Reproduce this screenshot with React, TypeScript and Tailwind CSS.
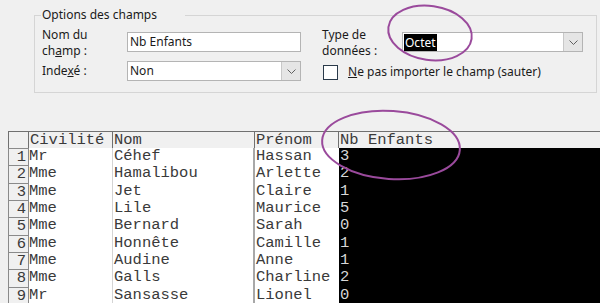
import React from "react";

const rows = [
  ["Mr", "Céhef", "Hassan", "3"],
  ["Mme", "Hamalibou", "Arlette", "2"],
  ["Mme", "Jet", "Claire", "1"],
  ["Mme", "Lile", "Maurice", "5"],
  ["Mme", "Bernard", "Sarah", "0"],
  ["Mme", "Honnête", "Camille", "1"],
  ["Mme", "Audine", "Anne", "1"],
  ["Mme", "Galls", "Charline", "2"],
  ["Mr", "Sansasse", "Lionel", "0"],
];

// row heights alternate so the 9 rows land on the same pixels as the reference
const heights = ["h-[17px]", "h-[18px]", "h-[17px]", "h-[17px]", "h-[18px]", "h-[17px]", "h-[17px]", "h-[18px]", "h-[17px]"];

function Chevron() {
  return (
    <svg width="9" height="5" viewBox="0 0 9 5" fill="none">
      <path d="M0.5 0.5 L4.5 4.5 L8.5 0.5" stroke="#606060" strokeWidth="1" />
    </svg>
  );
}

function Combo({ width, children }: { width: string; children: React.ReactNode }) {
  return (
    <div className={`flex h-[20px] ${width} border border-[#b4b4b4] bg-white`}>
      <div className="flex flex-1 items-center pl-[1px]">{children}</div>
      <div className="flex w-[19px] items-center justify-center border-l border-[#c8c8c8] bg-[#e5e5e5]">
        <Chevron />
      </div>
    </div>
  );
}

export default function App() {
  return (
    <div
      className="relative h-[303px] w-[600px] overflow-hidden bg-[#f0f0f0] text-[#1a1a1a]"
      style={{ fontFamily: '"Noto Sans", "Open Sans", sans-serif' }}
    >
      {/* Options des champs */}
      <fieldset className="ml-[34px] mt-[7px] w-[563px] border border-[#d5d5d5] pb-[11px]">
        <legend className="ml-[6px] pr-[28px] pl-[1px] text-[12px] leading-[16px]">Options des champs</legend>
        <div className="mt-[4px] flex pl-[7px] text-[12px] leading-[16px]">
          <div className="w-[259px]">
            <div className="flex">
              <div className="w-[85px]">
                Nom du
                <br />
                ch<span className="underline">a</span>mp :
              </div>
              <div className="mt-[5px] flex h-[20px] w-[174px] items-center border border-[#b4b4b4] bg-white pl-[2px]">
                Nb Enfants
              </div>
            </div>
            <div className="mt-[2px] flex items-center">
              <div className="w-[85px]">
                Inde<span className="underline">x</span>é :
              </div>
              <Combo width="w-[174px]">
                <span className="pl-[1px]">Non</span>
              </Combo>
            </div>
          </div>
          <div className="ml-[21px]">
            <div className="flex">
              <div className="w-[80px]">
                Type de
                <br />
                données :
              </div>
              <div className="mt-[5px]">
                <Combo width="w-[181px]">
                  <span className="bg-black px-[1px] leading-[17px] text-white">Octet</span>
                </Combo>
              </div>
            </div>
            <div className="mt-[5px] flex items-center">
              <div className="ml-[1px] h-[15px] w-[15px] border border-[#2a3a4a] bg-white" />
              <div className="ml-[10px]">
                <span className="underline">N</span>e pas importer le champ (sauter)
              </div>
            </div>
          </div>
        </div>
      </fieldset>

      {/* Data preview grid */}
      <div
        className="ml-[8px] mt-[38px] grid grid-cols-[21px_84px_142px_84px_1fr] text-[15.5px] leading-[17px] text-[#3a3a3a]"
        style={{ fontFamily: '"Liberation Mono", "Courier New", monospace' }}
      >
        <div className="h-[17px] border-l border-t border-r border-[#707070] bg-[#f0f0f0]" />
        <div className="h-[17px] border-t border-r border-[#707070] bg-[#f0f0f0] pl-[1px]">Civilité</div>
        <div className="h-[17px] border-t border-r border-[#707070] bg-[#f0f0f0] pl-[1px]">Nom</div>
        <div className="h-[17px] border-t border-r border-[#707070] bg-[#f0f0f0] pl-[1px]">Prénom</div>
        <div className="h-[17px] border-t border-[#707070] bg-[#f0f0f0] pl-[1px]">Nb Enfants</div>
        {rows.map((r, i) => (
          <React.Fragment key={i}>
            <div className={`${heights[i]} border-l border-t border-r border-[#8a8a8a] bg-[#f0f0f0] pr-[2px] text-right`}>
              {i + 1}
            </div>
            <div className={`${heights[i]} border-r border-[#d4d4d4] bg-white`}>{r[0]}</div>
            <div className={`${heights[i]} border-r-2 border-[#a8a8a8] bg-white pl-[1px]`}>{r[1]}</div>
            <div className={`${heights[i]} bg-white pl-[1px]`}>{r[2]}</div>
            <div className={`${heights[i]} bg-black pl-[1px] text-[#d8d8d8]`}>{r[3]}</div>
          </React.Fragment>
        ))}
      </div>

      {/* hand-drawn annotation circles */}
      <svg className="pointer-events-none absolute left-0 top-0" width="600" height="303">
        <ellipse cx="430" cy="33" rx="42" ry="27" fill="none" stroke="#9a4a9c" strokeWidth="2" transform="rotate(8 430 33)" />
        <ellipse cx="391" cy="145" rx="69" ry="34" fill="none" stroke="#9a4a9c" strokeWidth="2" transform="rotate(4 391 145)" />
      </svg>
    </div>
  );
}
